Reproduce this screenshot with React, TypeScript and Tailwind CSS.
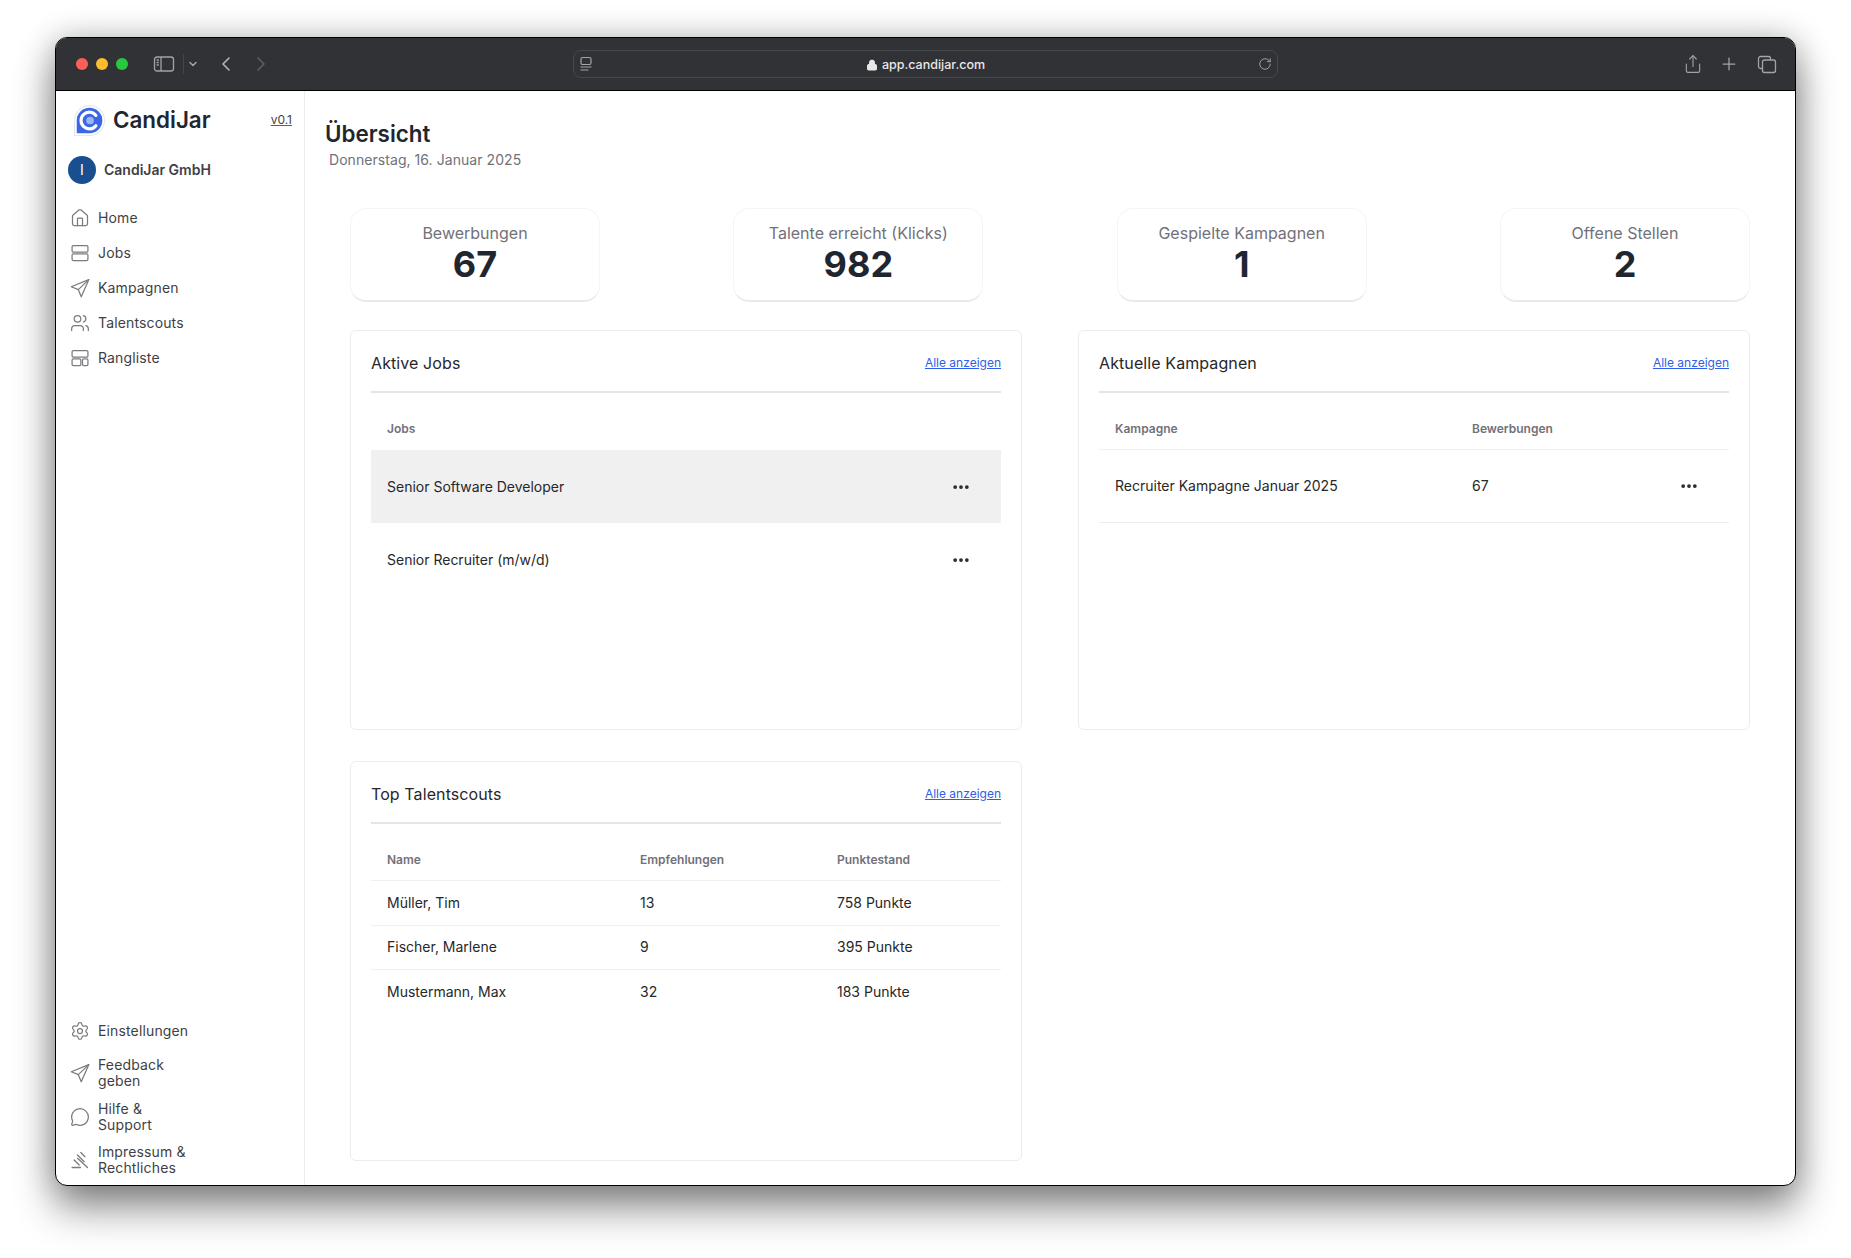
import React from 'react';
import { ChevronDown, ChevronLeft, ChevronRight, Ellipsis, Home, Lock, MessageCircle, Plus, RotateCw, Settings, Share, Users } from 'lucide-react';

// Paper plane, the lucide one points the wrong way
const PlaneIcon = () => (
  <svg width="20" height="20" viewBox="0 0 24 24" fill="none" stroke="currentColor" strokeWidth="1.5" strokeLinejoin="round" strokeLinecap="round">
    <path d="M22.5 2 1.5 10.5l8.5 3.5 3.5 8.5L22.5 2Z" />
    <path d="M22.5 2 10 14" />
  </svg>
);

const RowsIcon = () => (
  <svg width="20" height="20" viewBox="0 0 24 24" fill="none" stroke="currentColor" strokeWidth="1.5">
    <rect x="2.5" y="3" width="19" height="8" rx="1.5" />
    <rect x="2.5" y="13" width="19" height="8" rx="1.5" />
  </svg>
);

const BoardIcon = () => (
  <svg width="20" height="20" viewBox="0 0 24 24" fill="none" stroke="currentColor" strokeWidth="1.5">
    <rect x="2.5" y="3" width="19" height="8" rx="1.5" />
    <rect x="2.5" y="13" width="10.5" height="8" rx="1.5" />
    <rect x="15" y="13" width="6.5" height="8" rx="1.5" />
  </svg>
);

const GavelIcon = () => (
  <svg width="20" height="20" viewBox="0 0 24 24" fill="none" stroke="currentColor" strokeWidth="1.6" strokeLinecap="round">
    <path d="M2.5 21h10" />
    <path d="M9 10l12 11" />
    <path d="M5 12l6 6" />
    <path d="M9 6l8 8" />
    <path d="M13 3l5 5" />
  </svg>
);

const SidebarToggleIcon = () => (
  <svg width="22" height="18" viewBox="0 0 22 18" fill="none" stroke="currentColor" strokeWidth="1.3">
    <rect x="1.5" y="2" width="19" height="14" rx="2.5" />
    <path d="M8 2v14" />
    <path d="M3.6 5h2.2M3.6 7.5h2.2M3.6 10h2.2" />
  </svg>
);

const TabOverviewIcon = () => (
  <svg width="14" height="16" viewBox="0 0 14 16" fill="none" stroke="currentColor" strokeWidth="1.2">
    <rect x="2" y="1.5" width="10" height="7" rx="1.5" />
    <path d="M1.5 11h11M1.5 14h8" />
  </svg>
);

const TabsIcon = () => (
  <svg width="20" height="20" viewBox="0 0 20 20" fill="none" stroke="currentColor" strokeWidth="1.3">
    <path d="M5 14.5H3.5a2 2 0 0 1-2-2v-8a2 2 0 0 1 2-2h8a2 2 0 0 1 2 2V6" />
    <rect x="5.5" y="6" width="13" height="12.5" rx="2" />
  </svg>
);

const Logo = () => (
  <svg width="32" height="32" viewBox="0 0 30 30" fill="none">
    <path d="M1.5 15.5a14 14 0 1 1 14 14H1.5V15.5Z" fill="#fff" stroke="#e5e7eb" strokeWidth="1" />
    <path d="M3.5 15.5a12 12 0 1 1 12 12H3.5V15.5Z" fill="#3b66e6" />
    <path d="M21.5 10.7a7.8 7.8 0 1 0 0 9.6" stroke="#fff" strokeWidth="3" strokeLinecap="round" />
    <circle cx="16" cy="15.5" r="3.6" fill="#9db4f2" />
  </svg>
);

const topNav = [
  { label: 'Home', icon: <Home size={20} strokeWidth={1.5} /> },
  { label: 'Jobs', icon: <RowsIcon /> },
  { label: 'Kampagnen', icon: <PlaneIcon /> },
  { label: 'Talentscouts', icon: <Users size={20} strokeWidth={1.5} /> },
  { label: 'Rangliste', icon: <BoardIcon /> },
];

const bottomNav = [
  { label: ['Feedback', 'geben'], icon: <PlaneIcon /> },
  { label: ['Hilfe &', 'Support'], icon: <MessageCircle size={20} strokeWidth={1.5} /> },
  { label: ['Impressum &', 'Rechtliches'], icon: <GavelIcon /> },
];

const stats = [
  { label: 'Bewerbungen', value: '67' },
  { label: 'Talente erreicht (Klicks)', value: '982' },
  { label: 'Gespielte Kampagnen', value: '1' },
  { label: 'Offene Stellen', value: '2' },
];

const scouts = [
  { name: 'Müller, Tim', recs: '13', score: '758 Punkte' },
  { name: 'Fischer, Marlene', recs: '9', score: '395 Punkte' },
  { name: 'Mustermann, Max', recs: '32', score: '183 Punkte' },
];

function StatCard({ label, value }: { label: string; value: string }) {
  return (
    <div className="w-[250px] h-[94px] rounded-2xl border border-[#f5f5f6] border-b-2 border-b-[#e9eaec] flex flex-col items-center pt-[14px]">
      <div className="text-base leading-[20px] text-[#71717a]">{label}</div>
      <div className="text-[36px] leading-[42px] font-bold text-[#1f2630]">{value}</div>
    </div>
  );
}

function Panel({ title, children }: { title: string; children: React.ReactNode }) {
  return (
    <div className="w-[672px] h-[400px] rounded-md border border-[#ececee] px-5">
      <div className="h-[62px] pt-[3px] border-b-2 border-[#e5e5e7] flex items-center justify-between">
        <span className="text-base tracking-[0.006em] text-[#27272a]">{title}</span>
        <a className="text-xs text-[#2f5fe8] underline">Alle anzeigen</a>
      </div>
      {children}
    </div>
  );
}

export default function App() {
  return (
    <div className="w-[1851px] h-[1258px] bg-white pl-[55px] pt-[37px] overflow-hidden" style={{ fontFamily: 'Inter, sans-serif' }}>
      <div className="w-[1741px] h-[1149px] rounded-[12px] bg-white border border-black overflow-hidden flex flex-col shadow-[0_22px_40px_rgba(0,0,0,0.45),0_0_32px_rgba(0,0,0,0.22)]">
        {/* Browser bar */}
        <div className="h-[53px] shrink-0 bg-[#313236] border-b border-black flex items-center text-[#a3a4a7]">
          <div className="flex items-center gap-[8px] ml-[20px] w-[70px]">
            <span className="w-3 h-3 rounded-full bg-[#ff5f57]" />
            <span className="w-3 h-3 rounded-full bg-[#febc2e]" />
            <span className="w-3 h-3 rounded-full bg-[#28c840]" />
          </div>
          <div className="ml-[7px] flex items-center">
            <SidebarToggleIcon />
            <span className="w-px h-5 bg-[#45464a] ml-2 mr-[3px]" />
            <ChevronDown size={12} strokeWidth={3} />
          </div>
          <ChevronLeft size={24} strokeWidth={1.6} className="ml-[15px] text-[#b5b6b8]" />
          <ChevronRight size={24} strokeWidth={1.6} className="ml-[11px] text-[#5d5e62]" />
          <div className="ml-[300px] w-[705px] h-[28px] rounded-lg border border-[#47484c] flex items-center justify-between pl-[5px] pr-[5px] relative">
            <TabOverviewIcon />
            <div className="absolute inset-0 pt-[2px] flex items-center justify-center gap-1 text-[12.5px] font-medium text-[#e8e8e9]">
              <Lock size={12} fill="currentColor" strokeWidth={2} />
              <span>app.candijar.com</span>
            </div>
            <RotateCw size={14} strokeWidth={1.6} />
          </div>
          <div className="ml-auto mr-[18px] flex items-center">
            <Share size={20} strokeWidth={1.3} />
            <Plus size={20} strokeWidth={1.5} className="ml-[16px]" />
            <span className="ml-[18px]">
              <TabsIcon />
            </span>
          </div>
        </div>

        <div className="flex flex-1 min-h-0">
          {/* Sidebar */}
          <aside className="w-[249px] shrink-0 border-r border-[#ececee] flex flex-col pl-[12px] pr-[12px]">
            <div className="flex items-center justify-between h-[56px] pl-[5px] mt-[1px]">
              <div className="flex items-center gap-[8px]">
                <Logo />
                <span className="text-[22.4px] font-semibold text-[#1f2630]">CandiJar</span>
              </div>
              <a className="text-xs text-[#3f3f46] underline decoration-[#2563eb]">v0.1</a>
            </div>
            <div className="flex items-center gap-2 h-[28px] mt-[8px]">
              <span className="w-[28px] h-[28px] rounded-full bg-[#1a4f8f] text-white text-sm flex items-center justify-center">I</span>
              <span className="text-sm font-semibold text-[#3f3f46]">CandiJar GmbH</span>
            </div>
            <nav className="mt-[16px] flex flex-col">
              {topNav.map((item) => (
                <div key={item.label} className="h-[35px] flex items-center gap-[8px] pl-[2px]">
                  <span className="w-[20px] text-[#7b7b82] flex justify-center">{item.icon}</span>
                  <span className="text-sm tracking-[0.01em] text-[#3f3f46]">{item.label}</span>
                </div>
              ))}
            </nav>
            <div className="mt-auto pb-[3px] flex flex-col">
              <div className="h-[35px] mb-[3px] flex items-center gap-[8px] pl-[2px]">
                <Settings size={20} strokeWidth={1.5} className="text-[#7b7b82]" />
                <span className="text-sm tracking-[0.01em] text-[#3f3f46]">Einstellungen</span>
              </div>
              {bottomNav.map((item) => (
                <div key={item.label[0]} className="h-[43.5px] flex items-center gap-[8px] pl-[2px]">
                  <span className="w-[20px] text-[#7b7b82] flex justify-center">{item.icon}</span>
                  <span className="text-sm leading-[16px] tracking-[0.01em] text-[#3f3f46]">
                    {item.label[0]}
                    <br />
                    {item.label[1]}
                  </span>
                </div>
              ))}
            </div>
          </aside>

          {/* Main */}
          <main className="flex-1 min-w-0 pl-[20px] pt-[27px]">
            <h1 className="text-[22.4px] leading-[32px] font-semibold text-[#1f2630]">Übersicht</h1>
            <p className="text-sm leading-[20px] tracking-[0.004em] text-[#71717a] ml-1">Donnerstag, 16. Januar 2025</p>
            <div className="ml-[25px] mr-[45px] mt-[38px]">
              <div className="flex justify-between">
                {stats.map((s) => (
                  <StatCard key={s.label} label={s.label} value={s.value} />
                ))}
              </div>
              <div className="grid grid-cols-[672px_672px] justify-between gap-y-[31px] mt-[28px]">
                <Panel title="Aktive Jobs">
                  <div className="h-[57px] pt-[26px] pl-4 text-xs leading-[20px] font-semibold text-[#71717a]">Jobs</div>
                  <div className="h-[73px] bg-[#f0f0f0] flex items-center justify-between pl-4 pr-[30px] text-sm text-[#27272a]">
                    <span>Senior Software Developer</span>
                    <Ellipsis size={20} strokeWidth={2.5} />
                  </div>
                  <div className="h-[73px] flex items-center justify-between pl-4 pr-[30px] text-sm text-[#27272a]">
                    <span>Senior Recruiter (m/w/d)</span>
                    <Ellipsis size={20} strokeWidth={2.5} />
                  </div>
                </Panel>
                <Panel title="Aktuelle Kampagnen">
                  <div className="h-[57px] pt-[26px] pl-4 text-xs leading-[20px] font-semibold text-[#71717a] border-b border-[#f0f0f1] flex">
                    <span className="w-[357px]">Kampagne</span>
                    <span>Bewerbungen</span>
                  </div>
                  <div className="h-[73px] flex items-center pl-4 pr-[30px] text-sm text-[#27272a] border-b border-[#ececee]">
                    <span className="w-[357px]">Recruiter Kampagne Januar 2025</span>
                    <span>67</span>
                    <Ellipsis size={20} strokeWidth={2.5} className="ml-auto" />
                  </div>
                </Panel>
                <Panel title="Top Talentscouts">
                  <div className="h-[57px] pt-[26px] pl-4 text-xs leading-[20px] font-semibold text-[#71717a] border-b border-[#f0f0f1] flex">
                    <span className="w-[253px]">Name</span>
                    <span className="w-[197px]">Empfehlungen</span>
                    <span>Punktestand</span>
                  </div>
                  {scouts.map((s) => (
                    <div key={s.name} className="h-[44.6px] flex items-center pl-4 text-sm text-[#27272a] border-b border-[#f0f0f1] last:border-b-0">
                      <span className="w-[253px]">{s.name}</span>
                      <span className="w-[197px]">{s.recs}</span>
                      <span>{s.score}</span>
                    </div>
                  ))}
                </Panel>
              </div>
            </div>
          </main>
        </div>
      </div>
    </div>
  );
}
